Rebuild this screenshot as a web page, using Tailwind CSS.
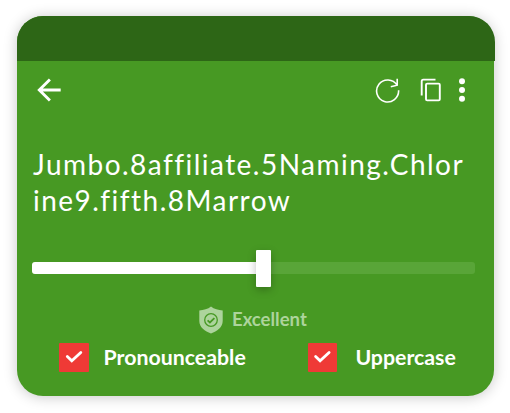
<!DOCTYPE html>
<html lang="en">
<head>
  <meta charset="UTF-8" />
  <meta name="viewport" content="width=device-width, initial-scale=1.0" />
  <title>Password Generator</title>
  <script src="https://cdn.jsdelivr.net/npm/@tailwindcss/browser@4"></script>
</head>
<body class="bg-white text-white font-['Lato',sans-serif] w-[510px] h-[413px] overflow-hidden pt-4 pl-[16.5px]">
  <main class="w-[477px] h-[380.4px] rounded-[26px] bg-[#479923] shadow-[0_1px_14px_rgba(0,0,0,0.22)]">
    <!-- Status bar -->
    <div class="w-[478px] h-[45px] rounded-t-[26px] bg-[#2d6616]"></div>

    <!-- Toolbar -->
    <header class="flex items-center h-[58px] pl-[20.5px] pr-[28.3px]">
      <button aria-label="Back">
        <svg class="w-6 h-6" viewBox="0 0 24 24" fill="none" stroke="currentColor" stroke-width="2.9">
          <path d="M23.7 12H2M12.9 1.5 2.3 12 12.9 22.5" />
        </svg>
      </button>
      <button class="ml-auto" aria-label="Regenerate">
        <svg class="w-[26px] h-[26px]" viewBox="0 0 26 26" fill="none" stroke="currentColor" stroke-width="1.6">
          <path d="M22 8.2A11 11 0 1 0 23.6 13.3M22.2 1.8V8.2L15.8 9.7" />
        </svg>
      </button>
      <button class="ml-[19px]" aria-label="Copy">
        <svg class="w-[22px] h-6" viewBox="0 0 22 24" fill="none" stroke="currentColor" stroke-width="1.9">
          <path d="M1.7 17.5V3.2Q1.7 1.6 3.3 1.6H15.5" />
          <rect x="6" y="5.6" width="13.8" height="16.8" rx="1.2" />
        </svg>
      </button>
      <button class="ml-[17px]" aria-label="More">
        <svg class="w-1.5 h-6" viewBox="0 0 6 24" fill="currentColor">
          <circle cx="3" cy="3.2" r="3" />
          <circle cx="3" cy="12" r="3" />
          <circle cx="3" cy="20.8" r="3" />
        </svg>
      </button>
    </header>

    <!-- Generated password -->
    <p class="pl-[16.5px] mt-[27px] text-[28px] leading-9 tracking-[1.47px] whitespace-nowrap">Jumbo.8affiliate.5Naming.Chlor<br />ine9.fifth.8Marrow</p>

    <!-- Length slider -->
    <div class="relative flex items-center h-9 mt-8 ml-[15.8px] w-[443px]">
      <div class="w-full h-3 rounded-[3px] bg-[#59a538]">
        <div class="w-[231px] h-full rounded-l-[3px] bg-white"></div>
      </div>
      <div class="absolute left-[224px] top-0 w-[15px] h-[36.5px] rounded-[1px] bg-white shadow-[0_3px_8px_rgba(0,0,0,0.25)]"></div>
    </div>

    <!-- Strength -->
    <div class="flex items-center h-7 mt-5 pl-[182.5px] text-[#add49c]">
      <svg class="w-6 h-7" viewBox="0 0 24 28">
        <path fill="currentColor" d="M12 0.5C15 3 19.5 4.2 23.7 4.5V15C23.7 21.5 18 25 12 27.5C6 25 0.3 21.5 0.3 15V4.5C4.5 4.2 9 3 12 0.5Z" />
        <g fill="none" stroke="#479923">
          <circle cx="12" cy="14" r="6.3" stroke-width="1.3" />
          <path d="m8.6 14.3 2.3 2.1 4.5-4.3" stroke-width="1.8" />
        </g>
      </svg>
      <span class="ml-[9px] text-[18.5px] font-bold">Excellent</span>
    </div>

    <!-- Options -->
    <div class="flex items-center h-[30px] mt-2 pl-[42.5px] text-[21.3px] font-bold whitespace-nowrap">
      <div class="w-[30px] h-[29px] rounded-[1px] bg-[#ef3a36]">
        <svg class="w-full h-full" viewBox="0 0 30 29" fill="none" stroke="#fff" stroke-width="2.8" stroke-linecap="round">
          <path d="m8.3 13.4 4.5 4.4 9-8.3" />
        </svg>
      </div>
      <span class="ml-[14.6px] pt-0.5 w-[204.4px]">Pronounceable</span>
      <div class="w-[29px] h-[29px] rounded-[1px] bg-[#ef3a36]">
        <svg class="w-full h-full" viewBox="0 0 29 29" fill="none" stroke="#fff" stroke-width="2.8" stroke-linecap="round">
          <path d="m7.6 13.4 4.5 4.4 9-8.3" />
        </svg>
      </div>
      <span class="ml-[18.4px] pt-0.5">Uppercase</span>
    </div>
  </main>
</body>
</html>
